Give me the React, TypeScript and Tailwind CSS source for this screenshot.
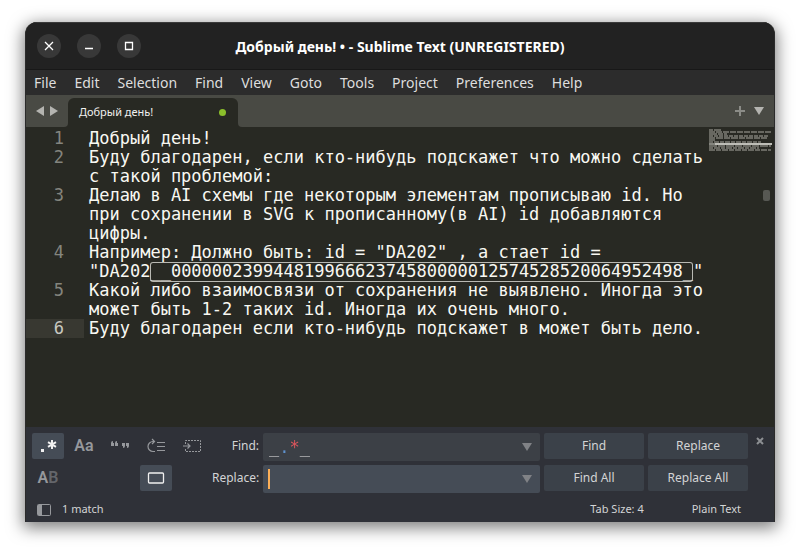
import React from "react";

const menus = ["File", "Edit", "Selection", "Find", "View", "Goto", "Tools", "Project", "Preferences", "Help"];

const lines: { n: number; rows: React.ReactNode[] }[] = [
  { n: 1, rows: ["Добрый день!"] },
  { n: 2, rows: ["Буду благодарен, если кто-нибудь подскажет что можно сделать", "с такой проблемой:"] },
  {
    n: 3,
    rows: [
      "Делаю в AI схемы где некоторым элементам прописываю id. Но",
      "при сохранении в SVG к прописанному(в AI) id добавляются",
      "цифры.",
    ],
  },
  {
    n: 4,
    rows: [
      'Например: Должно быть: id = "DA202" , а стает id =',
      <>
        "DA202
        <mark className="inline-block h-5 rounded-[3px] bg-transparent align-top text-inherit shadow-[inset_0_0_0_1px_#b9b9b3]">
          __00000023994481996662374580000012574528520064952498_
        </mark>
        "
      </>,
    ],
  },
  { n: 5, rows: ["Какой либо взаимосвязи от сохранения не выявлено. Иногда это", "может быть 1-2 таких id. Иногда их очень много."] },
  { n: 6, rows: ["Буду благодарен если кто-нибудь подскажет в может быть дело."] },
];

function Triangle({ className }: { className?: string }) {
  return (
    <svg className={className} width="10" height="8" viewBox="0 0 10 8" aria-hidden="true">
      <path d="M0 0h10L5 8z" fill="currentColor" />
    </svg>
  );
}

function Minimap() {
  const widths = [13, 63, 18, 60, 58, 6, 52, 63, 62, 50, 62];
  return (
    <svg className="mr-[2px] shrink-0" width="63" height="22" viewBox="0 0 63 22" aria-hidden="true">
      {widths.map((w, i) =>
        i === 7 ? (
          <path key={i} d="M0 15h6" stroke="#84857e" strokeWidth="2" />
        ) : (
          <path
            key={i}
            d={`M0 ${i * 2 + 1}H${w}`}
            stroke="#7d7e77"
            strokeWidth="1.5"
            strokeDasharray={`${4 + (i % 3) * 2} 1 ${7 - (i % 4)} 1`}
          />
        ),
      )}
      <path d="M6 15h57" stroke="#bdbdb6" strokeWidth="2" />
    </svg>
  );
}

function WindowButton({ label, children }: { label: string; children: React.ReactNode }) {
  return (
    <button aria-label={label} className="flex size-6 items-center justify-center rounded-full bg-[#383838] text-white">
      <svg width="10" height="10" viewBox="0 0 10 10" fill="none" stroke="currentColor" strokeWidth="1.3" aria-hidden="true">
        {children}
      </svg>
    </button>
  );
}

function Toggle({ label, active, children }: { label: string; active?: boolean; children: React.ReactNode }) {
  return (
    <button
      type="button"
      aria-label={label}
      aria-pressed={!!active}
      className={
        active
          ? "flex h-[26px] w-8 items-center justify-center rounded-xs bg-[#454c56] text-[#f0f0f0]"
          : "flex h-[26px] w-8 items-center justify-center rounded-xs text-[#96989c]"
      }
    >
      {children}
    </button>
  );
}

function ToggleIcon({ children }: { children: React.ReactNode }) {
  return (
    <svg width="20" height="16" viewBox="0 0 20 16" fill="none" stroke="currentColor" aria-hidden="true">
      {children}
    </svg>
  );
}

function PanelButton({ children }: { children: React.ReactNode }) {
  return (
    <button type="button" className="h-[26px] rounded-xs bg-[#3b4149] text-[12px] text-[#d3d4d5]">
      {children}
    </button>
  );
}

export default function App() {
  return (
    <div className="flex min-h-screen bg-white px-[25px] pt-[22px] pb-7 font-['Noto_Sans',sans-serif]">
      <main className="flex min-w-0 flex-1 flex-col overflow-hidden rounded-t-xl border-x border-[#2b2b2b] bg-[#282923] shadow-[0_4px_16px_2px_rgba(0,0,0,0.5)]">
        <header className="grid h-12 shrink-0 grid-cols-[1fr_auto_1fr] items-center border-t border-b border-t-[#3a3a3a] border-b-[#181818] bg-[#222222]">
          <div className="flex gap-4 pl-[11px]">
            <WindowButton label="Close">
              <path d="M1 1l8 8M9 1l-8 8" />
            </WindowButton>
            <WindowButton label="Minimize">
              <path d="M1 7.500h8" />
            </WindowButton>
            <WindowButton label="Maximize">
              <path d="M1.500 1.500h7v7h-7z" />
            </WindowButton>
          </div>
          <h1 className="text-[14px] font-bold whitespace-nowrap text-white">Добрый день! • - Sublime Text (UNREGISTERED)</h1>
        </header>

        <nav className="flex h-[25px] shrink-0 items-center gap-[18px] bg-[#2c2c2c] px-2 text-[14px] text-[#dedede]">
          {menus.map((m) => (
            <button key={m}>{m}</button>
          ))}
        </nav>

        <div className="flex h-8 shrink-0 text-[#b4b4b0]">
          <div className="flex w-[42px] items-center gap-1 rounded-br-sm bg-[#494a44] pl-[9px]">
            <button aria-label="Previous tab">
              <Triangle className="rotate-90" />
            </button>
            <button aria-label="Next tab">
              <Triangle className="-rotate-90" />
            </button>
          </div>
          <div className="flex w-[170px] bg-[linear-gradient(#494a44_12px,#282923_12px)] pt-[3px]">
            <div className="flex flex-1 items-center justify-between rounded-t-md bg-[#282923] pr-3 pl-[11px]">
              <button className="text-[11px] text-[#f0f0ee]">Добрый день!</button>
              <span className="size-[7px] rounded-full bg-[#8bbf2b]" />
            </div>
          </div>
          <div className="flex flex-1 items-center justify-end gap-[9px] rounded-bl-sm bg-[#494a44] pr-[10px]">
            <button aria-label="New tab" className="text-[#8b8c87]">
              <svg width="10" height="10" viewBox="0 0 10 10" stroke="currentColor" strokeWidth="2" aria-hidden="true">
                <path d="M5 0v10M0 5h10" />
              </svg>
            </button>
            <button aria-label="Tab list">
              <Triangle />
            </button>
          </div>
        </div>

        <section className="relative flex flex-1 pt-[2px]">
          <div className="min-w-0 flex-1 font-['DejaVu_Sans_Mono',monospace] text-[17px] leading-[19px] text-[#f8f8f2]">
            {lines.map((l) => (
              <div key={l.n} className="flex">
                <div
                  className={
                    l.n === 6
                      ? "w-[58px] shrink-0 bg-[#383831] pr-5 text-right text-[#c8c8c0]"
                      : "w-[58px] shrink-0 pr-5 text-right text-[#84857e]"
                  }
                >
                  {l.n}
                </div>
                <div className="pl-[5px] whitespace-nowrap">
                  {l.rows.map((r, i) => (
                    <div key={i} className="h-[19px]">
                      {r}
                    </div>
                  ))}
                </div>
              </div>
            ))}
          </div>
          <Minimap />
          <span className="absolute top-[63px] right-1 h-[11px] w-[7px] rounded-[2px] bg-[#575853]" />
        </section>

        <form className="shrink-0 bg-[#2f3138] text-[12px] text-[#d3d4d5]" onSubmit={(e) => e.preventDefault()}>
          <div className="grid grid-cols-[176px_47px_1fr_100px_100px_16px] items-start gap-1 px-[6px] pt-[6px]">
            <div className="flex gap-1">
              <Toggle label="Regular expression" active>
                <ToggleIcon>
                  <path d="M3 11h3v3H3z" fill="currentColor" stroke="none" />
                  <path d="M14 2v9M10 4.200l8 4.600M18 4.200l-8 4.600" strokeWidth="2" />
                </ToggleIcon>
              </Toggle>
              <Toggle label="Case sensitive">
                <span className="font-[Roboto,sans-serif] text-[16px] font-semibold">Aa</span>
              </Toggle>
              <Toggle label="Whole word">
                <ToggleIcon>
                  <path
                    d="M1 8V5q0-2 2-2v2h1v3zM5 8V5q0-2 2-2v2h1v3zM12 5h3v3q0 2-2 2V8h-1zM16 5h3v3q0 2-2 2V8h-1z"
                    fill="currentColor"
                    stroke="none"
                  />
                </ToggleIcon>
              </Toggle>
              <Toggle label="Wrap">
                <ToggleIcon>
                  <path d="M9 13.500H7A5 5 0 0 1 7 3.500h1M6 1l2.500 2.500L6 6" strokeWidth="1.2" />
                  <path d="M11 4.500h8M11 8.500h8M11 12.500h8" />
                </ToggleIcon>
              </Toggle>
              <Toggle label="In selection">
                <ToggleIcon>
                  <path d="M3.500 6V2.500h15v11h-15V10" strokeDasharray="2 1" />
                  <path d="M1 8h6.500M5.500 5.500L8 8l-2.500 2.500" strokeWidth="1.2" />
                </ToggleIcon>
              </Toggle>
            </div>
            <label htmlFor="find" className="text-right leading-[26px]">
              Find:
            </label>
            <div className="flex h-7 min-w-0 items-center rounded-xs bg-[#3c4046] pr-2">
              <input
                id="find"
                defaultValue="_.*_"
                className="h-7 min-w-0 flex-1 bg-[linear-gradient(90deg,#c4c5c6_16px,#5f93cf_16px,#5f93cf_26px,#e0555c_26px,#e0555c_36px,#c4c5c6_36px)] bg-clip-text pl-[6px] font-['DejaVu_Sans_Mono',monospace] text-[17px] text-transparent outline-none"
              />
              <button type="button" aria-label="Find history" className="text-[#808286]">
                <Triangle />
              </button>
            </div>
            <PanelButton>Find</PanelButton>
            <PanelButton>Replace</PanelButton>
            <button type="button" aria-label="Close panel" className="flex h-4 items-center justify-center text-[#8d8f93]">
              <svg width="8" height="8" viewBox="0 0 8 8" stroke="currentColor" strokeWidth="2" aria-hidden="true">
                <path d="M1 1l6 6M7 1L1 7" />
              </svg>
            </button>

            <div className="flex gap-1">
              <Toggle label="Preserve case">
                <span className="font-[Roboto,sans-serif] text-[16px] font-semibold">
                  A<span className="text-[#64666b]">B</span>
                </span>
              </Toggle>
              <div className="ml-[72px]">
                <Toggle label="Highlight matches" active>
                  <ToggleIcon>
                    <rect x="2.500" y="3" width="15" height="10" rx="1" strokeWidth="1.3" />
                  </ToggleIcon>
                </Toggle>
              </div>
            </div>
            <label htmlFor="replace" className="text-right leading-[26px]">
              Replace:
            </label>
            <div className="relative flex h-7 min-w-0 items-center rounded-xs bg-[#454c56] pr-2">
              <input
                id="replace"
                className="h-7 min-w-0 flex-1 pl-[6px] font-['DejaVu_Sans_Mono',monospace] text-[17px] caret-[#fbae57] outline-none"
              />
              <span className="absolute top-1 left-[5px] h-5 w-[2px] bg-[#fbae57]" />
              <button type="button" aria-label="Replace history" className="text-[#808286]">
                <Triangle />
              </button>
            </div>
            <PanelButton>Find All</PanelButton>
            <PanelButton>Replace All</PanelButton>
          </div>

          <div className="mt-1 flex h-[25px] items-center pr-[33px] pl-[11px] text-[11px]">
            <button type="button" aria-label="Toggle side bar" className="text-[#96989c]">
              <svg width="14" height="12" viewBox="0 0 14 12" fill="none" stroke="currentColor" aria-hidden="true">
                <rect x="0.500" y="0.500" width="13" height="11" rx="1" />
                <path d="M1 1h4v10H1z" fill="currentColor" stroke="none" />
              </svg>
            </button>
            <span className="ml-[11px] flex-1">1 match</span>
            <button type="button">Tab Size: 4</button>
            <button type="button" className="ml-12">
              Plain Text
            </button>
          </div>
        </form>
      </main>
    </div>
  );
}
